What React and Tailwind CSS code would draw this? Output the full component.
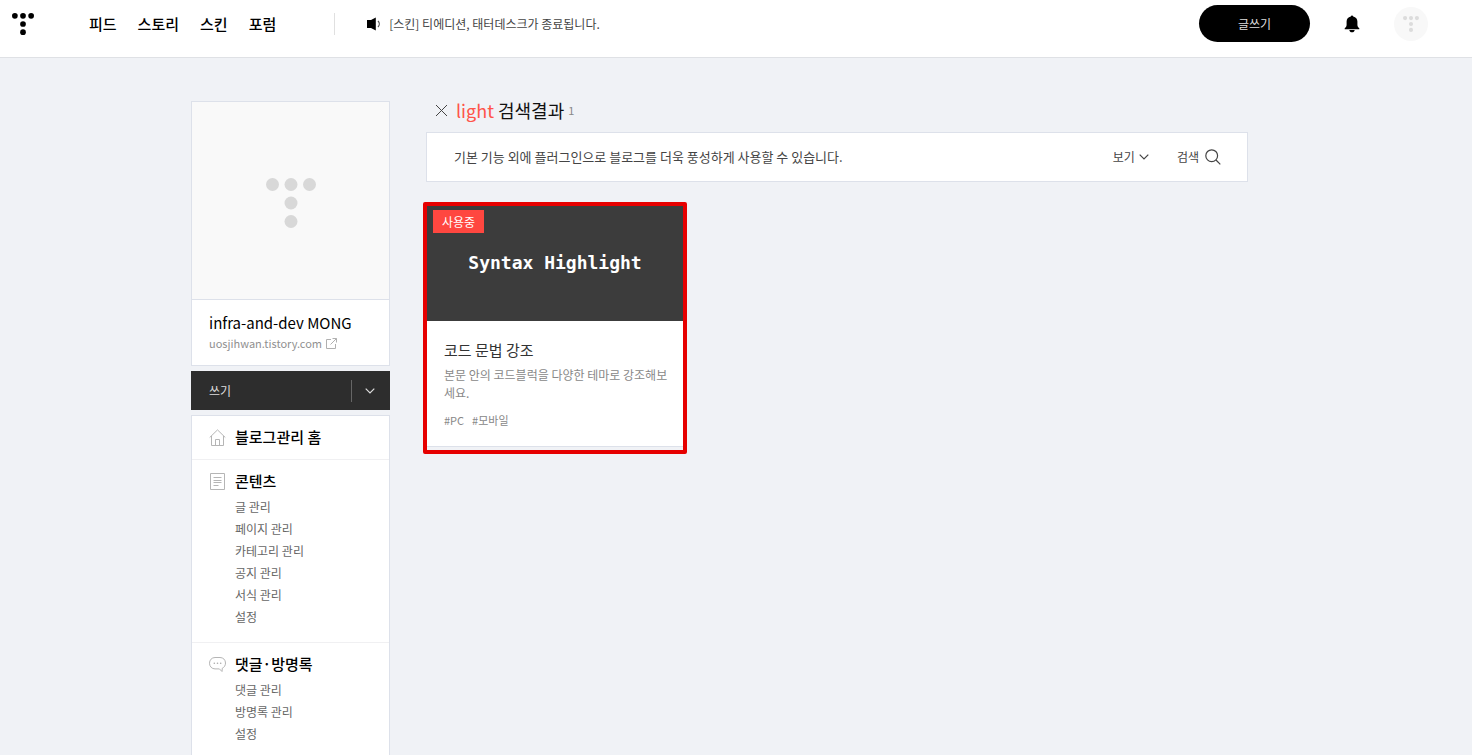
import React from 'react';

const NAV = ['피드', '스토리', '스킨', '포럼'];

const MENU = [
  { title: '블로그관리 홈', Icon: HomeIcon, items: [] },
  {
    title: '콘텐츠',
    Icon: DocumentIcon,
    items: ['글 관리', '페이지 관리', '카테고리 관리', '공지 관리', '서식 관리', '설정'],
  },
  { title: '댓글·방명록', Icon: CommentIcon, items: ['댓글 관리', '방명록 관리', '설정'] },
];

function DotLogo({ className }) {
  return (
    <svg viewBox="0 0 408 408" className={className} fill="currentColor" aria-hidden="true">
      <circle cx="53" cy="53" r="53" />
      <circle cx="204" cy="53" r="53" />
      <circle cx="355" cy="53" r="53" />
      <circle cx="204" cy="204" r="53" />
      <circle cx="204" cy="355" r="53" />
    </svg>
  );
}

function SpeakerIcon() {
  return (
    <svg width="15" height="14" viewBox="0 0 15 14" aria-hidden="true">
      <path d="M0 3h4L8.8 0.4v13.2L4 11H0z" fill="#000" />
      <path d="M11 4c1.700 1.700 1.700 4.300 0 6" fill="none" stroke="#555" strokeWidth="1.2" />
    </svg>
  );
}

function BellIcon() {
  return (
    <svg width="16" height="18" viewBox="0 0 16 18" fill="#000" aria-hidden="true">
      <path d="M8 0.5c.7 0 1.1.4 1.200 1C11.900 2 13.400 3.900 13.400 6.500v3.300c0 1.600.6 2.500 1.900 3.400v1H.7v-1C2 12.300 2.600 11.400 2.600 9.800V6.500C2.600 3.900 4.100 2 6.800 1.500c.1-.6.5-1 1.200-1z" />
      <path d="M5.300 15h5.400c-.2 1.400-1.200 2.300-2.700 2.300S5.500 16.400 5.300 15z" />
    </svg>
  );
}

function ExternalIcon() {
  return (
    <svg width="11" height="11" viewBox="0 0 11 11" fill="none" stroke="#b0b0b0" aria-hidden="true">
      <path d="M5 1.500H.5v9h9V6M6.500.5h4v4M10.500.5L4.500 6.500" />
    </svg>
  );
}

function HomeIcon() {
  return (
    <svg width="17" height="17" viewBox="0 0 17 17" fill="none" stroke="#b5b5b5" aria-hidden="true">
      <path d="M.7 8.500L8.500.9l7.800 7.600M2.500 7v9.500h12V7M6.500 16.500v-6h4v6" />
    </svg>
  );
}

function DocumentIcon() {
  return (
    <svg width="17" height="17" viewBox="0 0 17 17" fill="none" stroke="#b5b5b5" aria-hidden="true">
      <path d="M1.500.5h14v16h-14zM4.500 4.500h8M4.500 7.500h8M4.500 9.500h8M4.500 12.500h5" />
    </svg>
  );
}

function CommentIcon() {
  return (
    <svg width="17" height="17" viewBox="0 0 17 17" aria-hidden="true">
      <path
        d="M6 1.500h5c3.200 0 5.500 2.300 5.500 5.500 0 2.500-1.300 4.400-3.200 5.200L13 15.500l-2.600-2.600H6C2.800 12.900.5 10.400.5 7.200S2.800 1.500 6 1.500z"
        fill="none"
        stroke="#b5b5b5"
      />
      <g fill="#aaa">
        <circle cx="5.300" cy="7.300" r=".8" />
        <circle cx="8.500" cy="7.300" r=".8" />
        <circle cx="11.700" cy="7.300" r=".8" />
      </g>
    </svg>
  );
}

function ChevronIcon({ className }) {
  return (
    <svg viewBox="0 0 10 6" className={className} fill="none" stroke="currentColor" strokeWidth="1.200" aria-hidden="true">
      <path d="M.7.700L5 5L9.300.7" />
    </svg>
  );
}

function SearchIcon() {
  return (
    <svg width="16" height="16" viewBox="0 0 16 16" fill="none" stroke="#444" strokeWidth="1.200" aria-hidden="true">
      <circle cx="6.700" cy="6.700" r="5.900" />
      <path d="M11 11l4.300 4.300" />
    </svg>
  );
}

function Header() {
  return (
    <header className="flex h-[58px] items-center border-b border-[#dfe1e5] bg-white pr-11 pb-[10px] pl-3">
      <a href="#home" aria-label="홈">
        <DotLogo className="h-[22px] w-[22px] text-black" />
      </a>
      <nav className="ml-[55px] flex gap-[21px] text-[15px] leading-5 font-medium text-black">
        {NAV.map((name) => (
          <a key={name} href="#nav">{name}</a>
        ))}
      </nav>
      <span className="ml-[58px] h-[22px] w-px bg-[#e0e0e0]" />
      <a href="#notice" className="ml-8 flex items-center gap-[7px] text-xs text-[#444]">
        <SpeakerIcon />
        [스킨] 티에디션, 태터데스크가 종료됩니다.
      </a>
      <div className="ml-auto flex items-center">
        <button className="h-[37px] w-[111px] rounded-full bg-black text-xs text-[#ddd]">글쓰기</button>
        <button aria-label="알림" className="ml-[34px]">
          <BellIcon />
        </button>
        <button
          aria-label="내 계정"
          className="ml-[34px] flex h-[34px] w-[34px] items-center justify-center rounded-full bg-[#f8f8f8]"
        >
          <DotLogo className="h-4 w-4 text-[#dcdcdc]" />
        </button>
      </div>
    </header>
  );
}

function Sidebar() {
  return (
    <aside className="flex w-[199px] shrink-0 flex-col">
      <section className="border border-[#dde1ea] bg-white">
        <div className="box-content flex aspect-square items-center justify-center border-b border-[#dde1ea] bg-[#f9f9f9]">
          <DotLogo className="mt-1 h-[50px] w-[50px] text-[#d8d8d8]" />
        </div>
        <div className="px-[17px] pt-3 pb-[13px]">
          <h2 className="text-[15px] leading-[22px] text-black">infra-and-dev MONG</h2>
          <a href="#blog" className="flex items-center gap-1 text-[11px] leading-[18px] text-[#909090]">
            uosjihwan.tistory.com
            <ExternalIcon />
          </a>
        </div>
      </section>
      <div className="mt-[5px] flex h-[39px] items-center bg-[#2d2d2d] text-xs text-[#ddd]">
        <a href="#write" className="flex-1 pl-[18px]">쓰기</a>
        <span className="h-[22px] w-px bg-[#666]" />
        <button aria-label="쓰기 메뉴" className="flex h-full w-[38px] items-center pl-[13px]">
          <ChevronIcon className="h-[6px] w-[10px]" />
        </button>
      </div>
      <nav className="mt-[5px] border border-[#dde1ea] bg-white">
        {MENU.map(({ title, Icon, items }) => (
          <section key={title} className="border-b border-[#f0f0f2] px-[17px] pt-[10px] pb-[11px]">
            <h3 className="text-[15px] leading-[22px] font-medium text-black">
              <a href="#menu" className="flex items-center gap-[9px]">
                <Icon />
                {title}
              </a>
            </h3>
            {items.length > 0 && (
              <ul className="mt-1 mb-[3px] pl-[26px] text-xs leading-[22px] text-[#666]">
                {items.map((item) => (
                  <li key={item}>
                    <a href="#menu">{item}</a>
                  </li>
                ))}
              </ul>
            )}
          </section>
        ))}
      </nav>
    </aside>
  );
}

function PluginCard() {
  return (
    <article className="-ml-[3px] w-[264px] rounded-[2px] border-4 border-[#e60000]">
      <div className="border-b border-[#dde1ea] bg-white">
        <div className="relative flex h-[115px] items-center justify-center bg-[#3c3c3c] pb-[2px]">
          <span className="absolute top-1 left-[6px] h-[23px] w-[51px] bg-[#ff4740] text-center text-xs leading-[23px] text-white">
            사용중
          </span>
          <span className="font-['DejaVu_Sans_Mono',monospace] text-[18px] leading-6 font-bold text-white">
            Syntax Highlight
          </span>
        </div>
        <div className="pt-[18px] pr-3 pb-[17px] pl-[17px]">
          <h3 className="text-[15px] leading-[22px] text-[#333]">코드 문법 강조</h3>
          <p className="mt-[5px] text-xs leading-[18px] break-all text-[#888]">
            본문 안의 코드블럭을 다양한 테마로 강조해보세요.
          </p>
          <ul className="mt-[9px] flex gap-2 text-[11px] leading-[18px] text-[#888]">
            <li>#PC</li>
            <li>#모바일</li>
          </ul>
        </div>
      </div>
      <div className="h-[3px]" />
    </article>
  );
}

export default function App() {
  return (
    <div className="min-h-screen bg-[#f0f2f6] font-['Noto_Sans_CJK_KR',sans-serif]">
      <Header />
      <div className="flex justify-center gap-9 pt-[43px] pr-[33px]">
        <Sidebar />
        <main className="w-full max-w-[822px]">
          <div className="flex h-[18px] items-center pl-[9px]">
            <button aria-label="검색 닫기">
              <svg width="13" height="13" viewBox="0 0 13 13" stroke="#444" aria-hidden="true">
                <path d="M1 1l11 11M12 1L1 12" />
              </svg>
            </button>
            <h1 className="ml-2 text-[18px] leading-5 text-[#111]">
              <span className="text-[#ff544a]">light</span> 검색결과
            </h1>
            <span className="ml-1 text-[11px] text-[#888]">1</span>
          </div>
          <div className="mt-[13px] flex h-[50px] items-center border border-[#dde1ea] bg-white pr-[26px] pl-[27px] text-xs text-[#444]">
            <p className="flex-1 text-[13px]">기본 기능 외에 플러그인으로 블로그를 더욱 풍성하게 사용할 수 있습니다.</p>
            <button className="flex items-center gap-1">
              보기
              <ChevronIcon className="h-[6px] w-[10px]" />
            </button>
            <button className="ml-7 flex items-center gap-[6px]">
              검색
              <SearchIcon />
            </button>
          </div>
          <div className="mt-5">
            <PluginCard />
          </div>
        </main>
      </div>
    </div>
  );
}
